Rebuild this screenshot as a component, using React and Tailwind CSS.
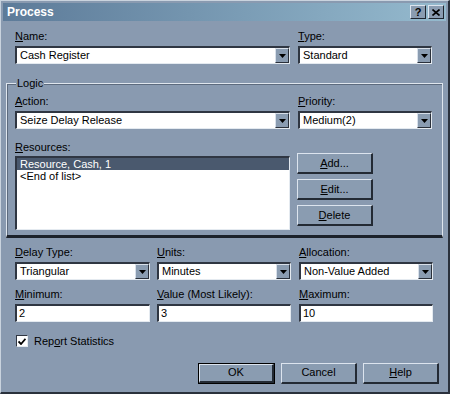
import React from "react";

const font = { fontFamily: '"Liberation Sans", Arial, sans-serif' };

function Label({ text, k, className = "" }) {
  // k = index of underlined accelerator letter
  return (
    <div className={`text-[11px] leading-[13px] text-black ${className}`}>
      {text.slice(0, k)}
      <span className="underline underline-offset-1">{text[k]}</span>
      {text.slice(k + 1)}
    </div>
  );
}

function Sunken({ className = "", children }) {
  return (
    <div className={`border-t-2 border-l-2 border-b border-r border-t-[#2f3642] border-l-[#2f3642] border-b-[#e4eaf0] border-r-[#e4eaf0] bg-white ${className}`}>
      {children}
    </div>
  );
}

function DropButton() {
  return (
    <div className="w-[14px] h-full flex items-center justify-center bg-[#8a9cb1] border-t border-l border-b border-r border-t-[#d8e0ea] border-l-[#d8e0ea] border-b-[#2a303a] border-r-[#2a303a]">
      <svg width="7" height="4" viewBox="0 0 7 4">
        <path d="M0 0h7L3.5 4z" fill="#000" />
      </svg>
    </div>
  );
}

function Combo({ value, w }) {
  return (
    <Sunken className={`${w} h-[18px] flex items-stretch`}>
      <div className="flex-1 pl-[3px] text-[11px] leading-[15px] text-black truncate">{value}</div>
      <DropButton />
    </Sunken>
  );
}

function Input({ value, w }) {
  return (
    <Sunken className={`${w} h-[18px]`}>
      <div className="pl-[2px] text-[11px] leading-[15px] text-black">{value}</div>
    </Sunken>
  );
}

function Button({ children, w = "w-[76px]", def = false }) {
  const inner = (
    <div className="h-full flex items-center justify-center text-[11px] text-black bg-[#8a9cb1] border-t border-l border-b-2 border-r-2 border-t-[#dce4ee] border-l-[#dce4ee] border-b-[#232a34] border-r-[#232a34]">
      {children}
    </div>
  );
  if (def) {
    return <div className={`${w} h-[21px] border border-black`}>{inner}</div>;
  }
  return <div className={`${w} h-[21px]`}>{inner}</div>;
}

function U({ c }) {
  return <span className="underline underline-offset-1">{c}</span>;
}

export default function App() {
  return (
    <div style={font} className="w-[450px] h-[394px] bg-[#899ab0] border-t border-l border-b-2 border-r-2 border-t-[#c9d3de] border-l-[#c9d3de] border-b-[#2a313c] border-r-[#2a313c] flex flex-col">
      {/* Title bar */}
      <div className="mx-[2px] mt-[2px] h-[18px] flex items-center justify-between bg-gradient-to-r from-[#5d7b99] to-[#95bace] pl-[4px] pr-[2px]">
        <span className="text-white font-bold text-[12px]">Process</span>
        <div className="flex gap-[2px]">
          <div className="w-[16px] h-[14px] bg-[#8a9cb1] border-t border-l border-b border-r border-t-[#dce4ee] border-l-[#dce4ee] border-b-[#1f252e] border-r-[#1f252e] flex items-center justify-center text-[11px] font-bold leading-none text-black">?</div>
          <div className="w-[16px] h-[14px] bg-[#8a9cb1] border-t border-l border-b border-r border-t-[#dce4ee] border-l-[#dce4ee] border-b-[#1f252e] border-r-[#1f252e] flex items-center justify-center">
            <svg width="8" height="7" viewBox="0 0 8 7">
              <path d="M0.5 0.5L7.5 6.5M7.5 0.5L0.5 6.5" stroke="#000" strokeWidth="1.6" />
            </svg>
          </div>
        </div>
      </div>

      {/* Name / Type */}
      <div className="flex gap-[8px] pl-[14px] mt-[9px]">
        <div className="flex flex-col gap-[2px]">
          <Label text="Name:" k={0} className="h-[14px]" />
          <Combo value="Cash Register" w="w-[275px]" />
        </div>
        <div className="flex flex-col gap-[2px]">
          <Label text="Type:" k={0} className="h-[14px]" />
          <Combo value="Standard" w="w-[134px]" />
        </div>
      </div>

      {/* Logic group */}
      <div className="relative mx-[5px] mt-[19px] h-[155px] border-t border-l border-r border-t-[#dfe6ee] border-l-[#dfe6ee] border-r-[#dfe6ee] border-b-[3px] border-b-[#1c222b] shadow-[inset_1px_1px_0_#5d6b7e]">
        <div className="absolute left-[9px] -top-[8px] px-[1px] bg-[#899ab0] text-[11px] leading-[14px] text-black">Logic</div>
        <div className="flex gap-[8px] pl-[8px] pt-[11px]">
          <div className="flex flex-col gap-[2px]">
            <Label text="Action:" k={0} className="h-[14px]" />
            <Combo value="Seize Delay Release" w="w-[275px]" />
          </div>
          <div className="flex flex-col gap-[2px]">
            <Label text="Priority:" k={0} className="h-[14px]" />
            <Combo value="Medium(2)" w="w-[134px]" />
          </div>
        </div>
        <div className="flex gap-[7px] pl-[8px] mt-[12px]">
          <div className="flex flex-col gap-[1px]">
            <Label text="Resources:" k={0} className="h-[14px]" />
            <Sunken className="w-[275px] h-[74px]">
              <div className="bg-[#4a596e] text-white text-[11px] leading-[12px] pl-[3px]">Resource, Cash, 1</div>
              <div className="text-black text-[11px] leading-[12px] pl-[3px]">&lt;End of list&gt;</div>
            </Sunken>
          </div>
          <div className="flex flex-col gap-[5px] pt-[12px]">
            <Button><U c="A" />dd...</Button>
            <Button><U c="E" />dit...</Button>
            <Button><U c="D" />elete</Button>
          </div>
        </div>
      </div>

      {/* Delay section */}
      <div className="flex gap-[7px] pl-[14px] mt-[8px]">
        <div className="flex flex-col gap-[2px]">
          <Label text="Delay Type:" k={0} className="h-[14px]" />
          <Combo value="Triangular" w="w-[135px]" />
        </div>
        <div className="flex flex-col gap-[2px]">
          <Label text="Units:" k={0} className="h-[14px]" />
          <Combo value="Minutes" w="w-[134px]" />
        </div>
        <div className="flex flex-col gap-[2px] ml-[1px]">
          <Label text="Allocation:" k={0} className="h-[14px]" />
          <Combo value="Non-Value Added" w="w-[134px]" />
        </div>
      </div>
      <div className="flex gap-[7px] pl-[14px] mt-[8px]">
        <div className="flex flex-col gap-[2px]">
          <Label text="Minimum:" k={0} className="h-[14px]" />
          <Input value="2" w="w-[135px]" />
        </div>
        <div className="flex flex-col gap-[2px]">
          <Label text="Value (Most Likely):" k={0} className="h-[14px]" />
          <Input value="3" w="w-[134px]" />
        </div>
        <div className="flex flex-col gap-[2px] ml-[1px]">
          <Label text="Maximum:" k={0} className="h-[14px]" />
          <Input value="10" w="w-[134px]" />
        </div>
      </div>

      {/* Checkbox */}
      <div className="flex items-center gap-[6px] pl-[15px] mt-[11px]">
        <div className="w-[12px] h-[12px] bg-white border-t border-l border-b border-r border-t-[#2f3642] border-l-[#2f3642] border-b-[#e4eaf0] border-r-[#e4eaf0] flex items-center justify-center">
          <svg width="8" height="7" viewBox="0 0 8 7">
            <path d="M0.5 3.5L3 6L7.5 0.8" stroke="#000" strokeWidth="1.8" fill="none" />
          </svg>
        </div>
        <span className="text-[11px] text-black">
          Rep<U c="o" />rt Statistics
        </span>
      </div>

      {/* Buttons */}
      <div className="flex justify-end gap-[6px] pr-[9px] mt-[13px]">
        <Button def w="w-[77px]">OK</Button>
        <Button>Cancel</Button>
        <Button><U c="H" />elp</Button>
      </div>
    </div>
  );
}
